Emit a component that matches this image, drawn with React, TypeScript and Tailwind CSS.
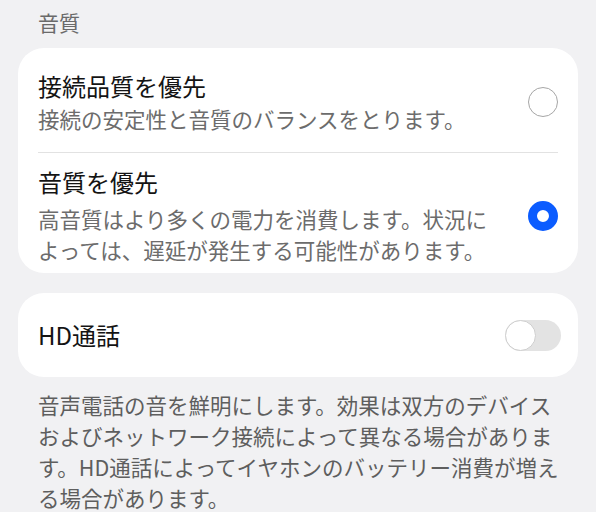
const font = { fontFamily: '"Noto Sans CJK JP", "Noto Sans", sans-serif' };

function Radio({ checked }: { checked: boolean }) {
  if (checked) {
    return <div className="w-[30px] h-[30px] shrink-0 rounded-full border-[9px] border-[#0b5cff] bg-white" />;
  }
  return <div className="w-[30px] h-[30px] shrink-0 rounded-full border-[1.5px] border-[#a6a6a6] bg-white" />;
}

function Toggle() {
  return (
    <div className="flex items-center w-[56px] h-[31px] rounded-full bg-[#e3e3e3]">
      <div className="w-[31px] h-[31px] rounded-full bg-white border-[1.5px] border-[#cfcfcf]" />
    </div>
  );
}

export default function App() {
  return (
    <div className="w-[596px] h-[512px] overflow-hidden bg-[#f1f1f3] px-[18px] pt-[7px]" style={font}>
      <div className="pl-5 text-[21px] leading-[31px] text-[#6a6a6a]">音質</div>

      <div className="mt-[10px] bg-white rounded-[26px] pl-5 pr-[20px]">
        <div className="flex items-center gap-[30px] pt-[22px] pb-[18px] border-b border-[#e2e2e2]">
          <div className="flex-1">
            <div className="text-[24px] leading-[32px] text-[#141414]">接続品質を優先</div>
            <div className="mt-px text-[21.5px] leading-[31px] text-[#6c6c6c]">
              接続の安定性と音質のバランスをとります。
            </div>
          </div>
          <Radio checked={false} />
        </div>
        <div className="flex items-center gap-[30px] pt-[13px] pb-[8px]">
          <div className="flex-1">
            <div className="text-[24px] leading-[32px] text-[#141414]">音質を優先</div>
            <div className="mt-[5px] text-[21.5px] leading-[31px] text-[#6c6c6c]">
              高音質はより多くの電力を消費します。状況によっては、遅延が発生する可能性があります。
            </div>
          </div>
          <Radio checked={true} />
        </div>
      </div>

      <div className="mt-5 h-[84px] bg-white rounded-[26px] pl-5 pr-[17px] flex items-center justify-between">
        <div className="text-[24px] leading-[32px] text-[#141414]">HD通話</div>
        <Toggle />
      </div>

      <div className="mt-3 pl-5 pr-[12px] text-[21.5px] leading-[31px] text-[#5e5e5e]">
        音声電話の音を鮮明にします。効果は双方のデバイスおよびネットワーク接続によって異なる場合があります。HD通話によってイヤホンのバッテリー消費が増える場合があります。
      </div>
    </div>
  );
}
